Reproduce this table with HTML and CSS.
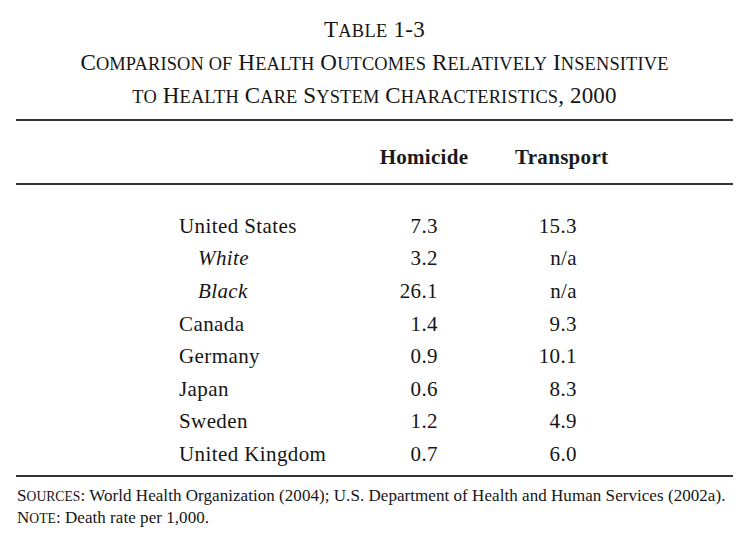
FILE: index.html
```html
<!DOCTYPE html>
<html>
<head>
<meta charset="utf-8">
<link rel="stylesheet" href="styles.css">
</head>
<body>
<div class="page">
  <div class="title">
    <div class="t1">T<span class="s">able</span> 1-3</div>
    <div class="t2">C<span class="s">omparison of</span> H<span class="s">ealth</span> O<span class="s">utcomes</span> R<span class="s">elatively</span> I<span class="s">nsensitive</span></div>
    <div class="t2"><span class="s">to</span> H<span class="s">ealth</span> C<span class="s">are</span> S<span class="s">ystem</span> C<span class="s">haracteristics</span>, 2000</div>
  </div>
  <div class="rule"></div>
  <div class="grid head">
    <div></div><div></div>
    <div class="hc">Homicide</div><div></div>
    <div class="hc">Transport</div>
  </div>
  <div class="rule"></div>
  <div class="body">
    <div class="grid row"><div></div><div class="lab">United States</div><div class="n1">7.3</div><div></div><div class="n2">15.3</div></div>
    <div class="grid row"><div></div><div class="lab sub">White</div><div class="n1">3.2</div><div></div><div class="n2">n/a</div></div>
    <div class="grid row"><div></div><div class="lab sub">Black</div><div class="n1">26.1</div><div></div><div class="n2">n/a</div></div>
    <div class="grid row"><div></div><div class="lab">Canada</div><div class="n1">1.4</div><div></div><div class="n2">9.3</div></div>
    <div class="grid row"><div></div><div class="lab">Germany</div><div class="n1">0.9</div><div></div><div class="n2">10.1</div></div>
    <div class="grid row"><div></div><div class="lab">Japan</div><div class="n1">0.6</div><div></div><div class="n2">8.3</div></div>
    <div class="grid row"><div></div><div class="lab">Sweden</div><div class="n1">1.2</div><div></div><div class="n2">4.9</div></div>
    <div class="grid row"><div></div><div class="lab">United Kingdom</div><div class="n1">0.7</div><div></div><div class="n2">6.0</div></div>
  </div>
  <div class="rule"></div>
  <div class="notes">
    <div>S<span class="s">ources</span>: World Health Organization (2004); U.S. Department of Health and Human Services (2002a).</div>
    <div>N<span class="s">ote</span>: Death rate per 1,000.</div>
  </div>
</div>
</body>
</html>
```

FILE: styles.css
```css
html, body {
  margin: 0;
  padding: 0;
  background: #fff;
}
body {
  font-family: "Liberation Serif", "Times New Roman", serif;
  color: #151515;
}
.page {
  width: 717px;
  margin-left: 16px;
  padding-top: 13px;
}
.s {
  text-transform: uppercase;
  font-size: 0.8em;
  line-height: 1;
}
.title {
  text-align: center;
  font-size: 23px;
  line-height: 33px;
  padding-bottom: 7px;
}
.title .t1 {
  letter-spacing: 0.3px;
}
.title .t2 {
  letter-spacing: 0.15px;
}
.rule {
  height: 2px;
  background: #333;
}
.grid {
  display: grid;
  grid-template-columns: 163px 199px 92px 45px 93px;
}
.head {
  height: 62px;
  align-items: center;
}
.hc {
  font-size: 21px;
  font-weight: bold;
  letter-spacing: 0.3px;
  color: #1a1a1a;
  text-align: center;
  padding-top: 10px;
}
.body {
  padding-top: 25px;
  padding-bottom: 4px;
}
.row {
  height: 32.6px;
  align-items: center;
  font-size: 21px;
  letter-spacing: 0.4px;
}
.lab.sub {
  font-style: italic;
  padding-left: 19px;
}
.n1 {
  text-align: right;
  padding-right: 32px;
}
.n2 {
  text-align: right;
  padding-right: 31px;
}
.notes {
  padding-top: 8px;
  font-size: 17px;
  line-height: 22px;
  padding-left: 1px;
  letter-spacing: 0.05px;
}
```
